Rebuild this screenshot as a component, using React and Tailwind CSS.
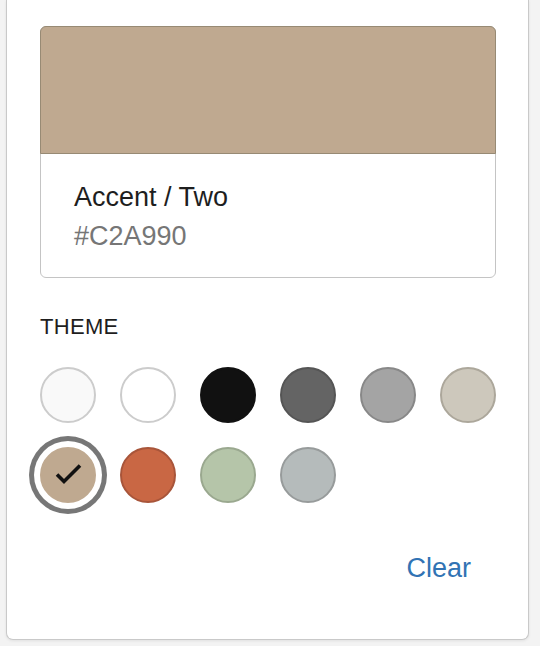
import React, { useState } from 'react';

const swatches = [
  { name: 'Base / One', hex: '#F9F9F9', bg: 'bg-[#f9f9f9]', border: 'border-[#cccccc]' },
  { name: 'Base / Two', hex: '#FFFFFF', bg: 'bg-white', border: 'border-[#cccccc]' },
  { name: 'Contrast / One', hex: '#111111', bg: 'bg-[#111111]', border: 'border-[#111111]' },
  { name: 'Contrast / Two', hex: '#636363', bg: 'bg-[#646464]', border: 'border-[#555555]' },
  { name: 'Contrast / Three', hex: '#A4A4A4', bg: 'bg-[#a4a4a4]', border: 'border-[#888888]' },
  { name: 'Accent / One', hex: '#CFCABE', bg: 'bg-[#cdc8bc]', border: 'border-[#aca79b]' },
  { name: 'Accent / Two', hex: '#C2A990', bg: 'bg-[#bfa990]', border: 'border-[#bfa990]' },
  { name: 'Accent / Three', hex: '#D8613C', bg: 'bg-[#c96744]', border: 'border-[#a8553a]' },
  { name: 'Accent / Four', hex: '#B1C5A4', bg: 'bg-[#b5c5a9]', border: 'border-[#9aa88f]' },
  { name: 'Accent / Five', hex: '#B5BDBC', bg: 'bg-[#b5bbbb]', border: 'border-[#979b9b]' },
];

const App = () => {
  // selected colour, Accent / Two by default
  const [selected, setSelected] = useState(6);
  const current = swatches[selected];

  return (
    <div className="min-h-[646px] bg-[#f3f3f3] pl-[6px] pr-[11px] font-['Liberation_Sans',Arial,sans-serif]">
      <div className="bg-white border-x border-b border-[#c9c9c9] rounded-b-[7px] shadow-[0_1px_3px_rgba(0,0,0,0.08)] pt-[26px] pb-[55px] pl-[33px] pr-[32px]">
        {/* Preview card */}
        <div className="border border-[#c4c4c4] rounded-[6px]">
          <div className="h-[128px] bg-[#bfa990] border border-[#978a74] rounded-t-[6px] -m-px"></div>
          <div className="pl-[33px] pt-[29px] pb-[25px]">
            <div className="text-[27px] leading-[31px] text-[#1e1e1e]">{current.name}</div>
            <div className="mt-[8px] text-[27px] leading-[31px] text-[#767676]">{current.hex}</div>
          </div>
        </div>

        {/* Theme palette */}
        <div className="mt-[36px] text-[22px] leading-[26px] font-medium tracking-[0.3px] text-[#1e1e1e]">THEME</div>
        <div className="mt-[27px] grid grid-cols-6 gap-x-[24px] gap-y-[24px]">
          {swatches.map((s, i) => (
            <button
              key={s.name}
              onClick={() => setSelected(i)}
              className={`relative w-[56px] h-[56px] rounded-full border-2 ${s.bg} ${s.border} ${
                i === selected ? 'shadow-[0_0_0_6px_#ffffff,0_0_0_11px_#777777]' : ''
              }`}
            >
              {i === selected && (
                <svg className="absolute -left-[2px] -top-[2px]" width="56" height="56" viewBox="0 0 56 56">
                  <polyline points="17,27.5 24,34.5 40,18.5" fill="none" stroke="#111" strokeWidth="3.6" />
                </svg>
              )}
            </button>
          ))}
        </div>

        <div className="mt-[50px] flex justify-end">
          <button className="mr-[25px] text-[27px] leading-[31px] text-[#3173b4]">Clear</button>
        </div>
      </div>
    </div>
  );
};

export default App;
